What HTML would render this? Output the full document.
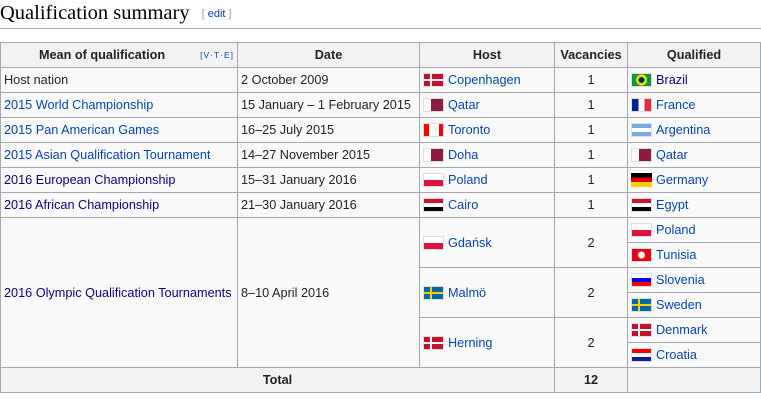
<!DOCTYPE html>
<html><head><meta charset="utf-8"><style>
body{margin:0;background:#fff;font-family:"Liberation Sans",sans-serif;font-size:12.7px;color:#222;width:761px;height:400px;overflow:hidden;position:relative}
h2{position:absolute;left:0;top:2px;margin:0;font-family:"Liberation Serif",serif;font-weight:normal;font-size:20.5px;color:#000}
.ed{font-family:"Liberation Sans",sans-serif;font-size:11px;color:#a6a6a6;margin-left:12px;vertical-align:2px}
.ed a{color:#0645ad}
.rule{position:absolute;left:0;top:28px;width:761px;height:1px;background:#a2a9b1}
table{position:absolute;left:0;top:42px;border-collapse:collapse;table-layout:fixed;background:#f9f9f9}
td,th{border:1px solid #a2a9b1;height:24px;line-height:16px;padding:0 3px;white-space:nowrap;overflow:hidden;vertical-align:middle}
th{background:#f2f2f2;font-weight:bold}
a{color:#0645ad;text-decoration:none}
a.v{color:#0b0080}
.c{text-align:center}
.f{display:inline-block;width:21px;height:14px;vertical-align:top;margin:1px 4px 0 0;border:1px solid #ddd;box-sizing:border-box}
.vte{float:right;font-size:8.5px;font-weight:normal;color:#0645ad;letter-spacing:1px}
</style></head><body>
<h2>Qualification summary<span class="ed">[ <a>edit</a> ]</span></h2>
<div class="rule"></div>
<table>
<col style="width:237px"><col style="width:182px"><col style="width:135px"><col style="width:73px"><col style="width:133px">
<tr><th>Mean of qualification <span class="vte">[V·T·E]</span></th><th>Date</th><th>Host</th><th>Vacancies</th><th>Qualified</th></tr>
<tr><td>Host nation</td><td>2 October 2009</td><td><span class="f" style="background:linear-gradient(90deg,transparent 6px,#fff 6px,#fff 8px,transparent 8px),linear-gradient(transparent 5px,#fff 5px,#fff 7px,transparent 7px),#c8102e"></span><a>Copenhagen</a></td><td class="c">1</td><td><span class="f" style="background:radial-gradient(circle,#002776 3px,#fedf00 3px,#fedf00 5px,#009b3a 6px)"></span><a class="v">Brazil</a></td></tr>
<tr><td><a>2015 World Championship</a></td><td>15 January – 1 February 2015</td><td><span class="f" style="background:linear-gradient(90deg,#fff 7px,#8d1b3d 7px)"></span><a>Qatar</a></td><td class="c">1</td><td><span class="f" style="background:linear-gradient(90deg,#002395 33%,#fff 33%,#fff 66%,#ed2939 66%)"></span><a>France</a></td></tr>
<tr><td><a>2015 Pan American Games</a></td><td>16–25 July 2015</td><td><span class="f" style="background:linear-gradient(90deg,#f00 5px,#fff 5px,#fff 15px,#f00 15px)"></span><a>Toronto</a></td><td class="c">1</td><td><span class="f" style="background:linear-gradient(#74acdf 33%,#fff 33%,#fff 66%,#74acdf 66%)"></span><a>Argentina</a></td></tr>
<tr><td><a>2015 Asian Qualification Tournament</a></td><td>14–27 November 2015</td><td><span class="f" style="background:linear-gradient(90deg,#fff 7px,#8d1b3d 7px)"></span><a>Doha</a></td><td class="c">1</td><td><span class="f" style="background:linear-gradient(90deg,#fff 7px,#8d1b3d 7px)"></span><a>Qatar</a></td></tr>
<tr><td><a class="v">2016 European Championship</a></td><td>15–31 January 2016</td><td><span class="f" style="background:linear-gradient(#fff 50%,#dc143c 50%)"></span><a>Poland</a></td><td class="c">1</td><td><span class="f" style="background:linear-gradient(#000 33%,#d00 33%,#d00 66%,#ffce00 66%);border:0"></span><a>Germany</a></td></tr>
<tr><td><a class="v">2016 African Championship</a></td><td>21–30 January 2016</td><td><span class="f" style="background:linear-gradient(#ce1126 33%,#fff 33%,#fff 66%,#000 66%)"></span><a>Cairo</a></td><td class="c">1</td><td><span class="f" style="background:linear-gradient(#ce1126 33%,#fff 33%,#fff 66%,#000 66%)"></span><a>Egypt</a></td></tr>
<tr><td rowspan="6"><a class="v">2016 Olympic Qualification Tournaments</a></td><td rowspan="6">8–10 April 2016</td><td rowspan="2"><span class="f" style="background:linear-gradient(#fff 50%,#dc143c 50%)"></span><a>Gdańsk</a></td><td rowspan="2" class="c">2</td><td><span class="f" style="background:linear-gradient(#fff 50%,#dc143c 50%)"></span><a>Poland</a></td></tr>
<tr><td><span class="f" style="background:radial-gradient(circle,#fff 3px,#e70013 4px)"></span><a>Tunisia</a></td></tr>
<tr><td rowspan="2"><span class="f" style="background:linear-gradient(90deg,transparent 6px,#fecc00 6px,#fecc00 8px,transparent 8px),linear-gradient(transparent 5px,#fecc00 5px,#fecc00 7px,transparent 7px),#006aa7"></span><a>Malmö</a></td><td rowspan="2" class="c">2</td><td><span class="f" style="background:linear-gradient(#fff 33%,#0000ff 33%,#0000ff 66%,#f00 66%)"></span><a>Slovenia</a></td></tr>
<tr><td><span class="f" style="background:linear-gradient(90deg,transparent 6px,#fecc00 6px,#fecc00 8px,transparent 8px),linear-gradient(transparent 5px,#fecc00 5px,#fecc00 7px,transparent 7px),#006aa7"></span><a>Sweden</a></td></tr>
<tr><td rowspan="2"><span class="f" style="background:linear-gradient(90deg,transparent 6px,#fff 6px,#fff 8px,transparent 8px),linear-gradient(transparent 5px,#fff 5px,#fff 7px,transparent 7px),#c8102e"></span><a>Herning</a></td><td rowspan="2" class="c">2</td><td><span class="f" style="background:linear-gradient(90deg,transparent 6px,#fff 6px,#fff 8px,transparent 8px),linear-gradient(transparent 5px,#fff 5px,#fff 7px,transparent 7px),#c8102e"></span><a>Denmark</a></td></tr>
<tr><td><span class="f" style="background:linear-gradient(#f00 33%,#fff 33%,#fff 66%,#171796 66%)"></span><a>Croatia</a></td></tr>
<tr><th colspan="3">Total</th><th>12</th><th></th></tr>
</table>
</body></html>
